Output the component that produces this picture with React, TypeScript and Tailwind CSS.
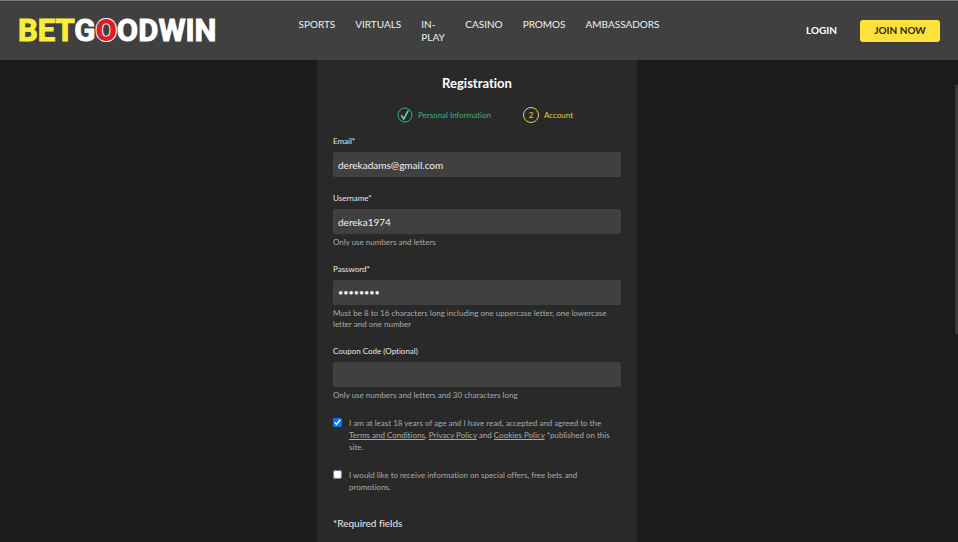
import React from 'react';

interface NavItem {
  label: string;
  href: string;
}

interface FieldProps {
  id: string;
  label: string;
  type?: string;
  value?: string;
  hint?: string;
}

const navItems: NavItem[] = [
  { label: 'SPORTS', href: '#sports' },
  { label: 'VIRTUALS', href: '#virtuals' },
  { label: 'IN-PLAY', href: '#in-play' },
  { label: 'CASINO', href: '#casino' },
  { label: 'PROMOS', href: '#promos' },
  { label: 'AMBASSADORS', href: '#ambassadors' },
];

const Logo: React.FC = () => (
  <a
    href="#home"
    aria-label="BetGoodwin"
    className="font-['Roboto',sans-serif] text-[31px] font-bold leading-none text-white [-webkit-text-stroke:1px_currentColor]"
  >
    <span className="text-[#fbee3b]">BET</span>G
    <span className="font-black text-[#e01a2b] [paint-order:stroke_fill] [-webkit-text-stroke:2px_#ffffff]">O</span>
    ODWIN
  </a>
);

const Header: React.FC = () => (
  <header className="flex h-[60px] items-center justify-between border-t border-[#7a7a7a] bg-[#404040] px-[18px]">
    <div className="flex flex-1">
      <Logo />
    </div>
    <nav className="flex h-full gap-5 pt-[17px] text-[10px] leading-[13px] text-[#f0f0f0]">
      {navItems.map(item => (
        <a key={item.label} href={item.href} className={item.label === 'IN-PLAY' ? 'w-6' : ''}>
          {item.label}
        </a>
      ))}
    </nav>
    <div className="flex flex-1 items-center justify-end gap-[23px] text-[10px] font-bold">
      <a href="#login" className="text-white">LOGIN</a>
      <button type="button" className="h-[22px] w-20 rounded-[3px] bg-[#ffe13c] font-bold text-[#2b2710]">
        JOIN NOW
      </button>
    </div>
  </header>
);

const Steps: React.FC = () => (
  <ol className="mt-4 flex justify-center gap-8 pl-4 text-[8px]">
    <li className="flex items-center gap-[5px] text-[#3fae83]">
      <svg viewBox="0 0 16 16" className="size-4" fill="none" stroke="currentColor" aria-hidden="true">
        <circle cx="8" cy="8" r="7" />
        <path d="M4.2 8.2 6.7 11.8 11.4 3.4" stroke="#5fd0a4" strokeWidth="1.7" />
      </svg>
      Personal Information
    </li>
    <li className="flex items-center gap-[5px] text-[#e6cf45]">
      <span className="flex size-4 items-center justify-center rounded-full border border-[#e6cf45]">2</span>
      Account
    </li>
  </ol>
);

const Field: React.FC<FieldProps> = ({ id, label, type = 'text', value = '', hint }) => (
  <div>
    <label htmlFor={id} className="block text-[8px] leading-[11px] text-[#e8e8e8]">
      {label}
    </label>
    <input
      id={id}
      type={type}
      defaultValue={value}
      className={`mt-[5px] block h-[25px] w-full rounded-[2px] bg-[#404040] px-[5px] text-[#f2f2f2] outline-none ${
        type === 'password' ? 'text-[9px]' : 'text-[10px]'
      }`}
    />
    {hint && <p className="mt-[3px] text-[8px] leading-[11px] text-[#a9a9a9]">{hint}</p>}
  </div>
);

const Consent: React.FC<{ id: string; checked?: boolean; children: React.ReactNode }> = ({ id, checked, children }) => (
  <div className="flex items-start gap-[7px]">
    <input id={id} type="checkbox" defaultChecked={checked} className="mt-px size-[9px] shrink-0" />
    <label htmlFor={id} className="text-[8px] leading-3 text-[#a9a9a9]">
      {children}
    </label>
  </div>
);

const RegistrationForm: React.FC = () => (
  <form className="w-full max-w-80 bg-[#292929] px-4 pt-[15px] pb-3.5">
    <h1 className="text-center text-[13px] leading-4 font-bold text-white">Registration</h1>
    <Steps />
    <div className="mt-[13px] flex flex-col gap-4">
      <Field id="email" label="Email*" type="email" value="derekadams@gmail.com" />
      <Field id="username" label="Username*" value="dereka1974" hint="Only use numbers and letters" />
      <Field
        id="password"
        label="Password*"
        type="password"
        value="Derek197"
        hint="Must be 8 to 16 characters long including one uppercase letter, one lowercase letter and one number"
      />
      <Field id="coupon" label="Coupon Code (Optional)" hint="Only use numbers and letters and 30 characters long" />
      <Consent id="terms" checked>
        I am at least 18 years of age and I have read, accepted and agreed to the{' '}
        <a href="#terms" className="underline">Terms and Conditions</a>,{' '}
        <a href="#privacy" className="underline">Privacy Policy</a> and{' '}
        <a href="#cookies" className="underline">Cookies Policy</a> *published on this site.
      </Consent>
      <Consent id="offers">
        I would like to receive information on special offers, free bets and promotions.
      </Consent>
    </div>
    <p className="mt-6 text-[10px] leading-3 text-[#ececec]">*Required fields</p>
  </form>
);

export default function App() {
  return (
    <div className="relative min-h-screen bg-[#1b1b1b] font-['Lato',sans-serif] [font-variant-ligatures:none]">
      <Header />
      <main className="flex justify-center pr-1">
        <RegistrationForm />
      </main>
      <div className="absolute top-[85px] right-0 h-[249px] w-[3px] bg-[#3a3a3a]" />
    </div>
  );
}
